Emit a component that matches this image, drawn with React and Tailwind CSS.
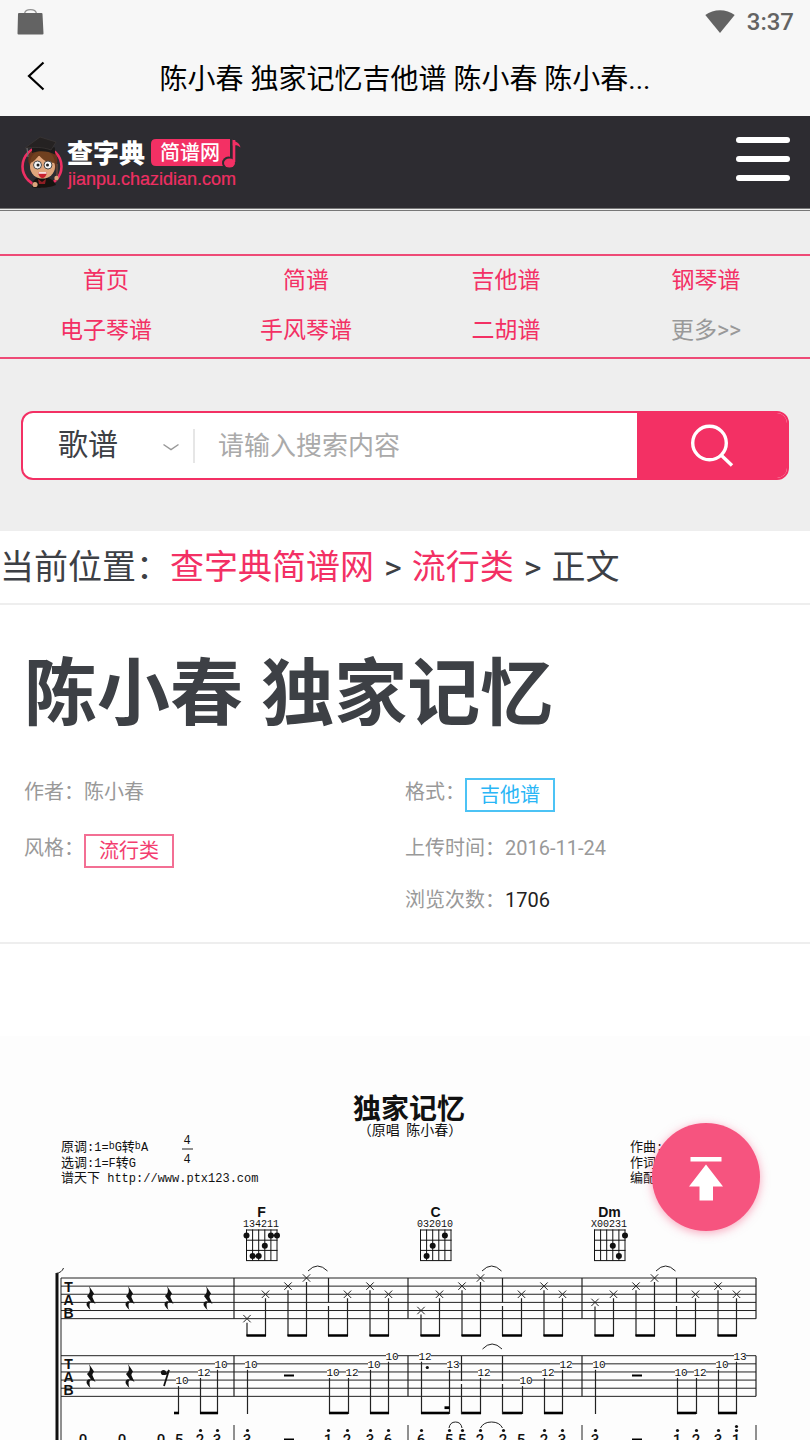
import React, { useState } from "react";

const navLinks = [
  { label: "首页", href: "#home" },
  { label: "简谱", href: "#jianpu" },
  { label: "吉他谱", href: "#guitar" },
  { label: "钢琴谱", href: "#piano" },
  { label: "电子琴谱", href: "#keyboard" },
  { label: "手风琴谱", href: "#accordion" },
  { label: "二胡谱", href: "#erhu" },
  { label: "更多>>", href: "#more", muted: true },
];

function StatusBar() {
  return (
    <div className="flex h-11 items-center justify-between px-4 text-[#636363]">
      <svg width="29" height="28" viewBox="0 0 29 28" aria-hidden="true">
        <path d="M8.5 5.500C9.500 .3 19.500 .3 20.500 5.500" fill="none" stroke="#909090" strokeWidth="1.300" />
        <path d="M3 5h22.500q1 0 1 1l1 19.500q0 1-1 1h-24q-1 0-1-1L2 6q0-1 1-1z" fill="currentColor" />
      </svg>
      <div className="flex items-center gap-3">
        <svg width="30" height="24" viewBox="0 0 30 24" aria-hidden="true">
          <path d="M.3 5C8.500-1.500 21.500-1.500 29.700 5L15 23z" fill="currentColor" />
        </svg>
        <span className="text-2xl font-medium">3:37</span>
      </div>
    </div>
  );
}

function TitleBar() {
  return (
    <div className="flex h-[72px] items-start">
      <button type="button" aria-label="返回" className="flex h-16 w-[72px] items-center justify-center">
        <svg width="18" height="30" viewBox="0 0 18 30" fill="none" stroke="#000" strokeWidth="2.200">
          <path d="M16.500 1.500L2 15l14.500 13.500" />
        </svg>
      </button>
      <h2 className="flex-1 truncate text-center text-[28px] leading-[72px] text-black">
        陈小春 独家记忆吉他谱 陈小春 陈小春...
      </h2>
      <div className="w-[72px]" />
    </div>
  );
}

function Logo() {
  return (
    <svg width="222" height="54" viewBox="0 0 222 54" role="img" aria-label="查字典简谱网" className="overflow-visible">
      {/* Mascot */}
      <circle cx="22" cy="30.500" r="19.500" fill="#2d2c31" stroke="#ee2f63" strokeWidth="2.600" />
      <path d="M12 51c0-7 4-10 10-10 7 0 12 3 14 8-6 2.500-18 4-24 2z" fill="#17130f" />
      <path d="M8.500 26C7 17 13 11 23 11s16 7 14 17l-2 6H11z" fill="#65341d" />
      <ellipse cx="22.500" cy="31" rx="12.500" ry="11.500" fill="#e0a67c" />
      <path d="M10 27c4-1 7-5 9-8 3 5 9 8 16 8-1-8-5-12-12-12S11 18 10 27z" fill="#70401f" />
      <circle cx="17.500" cy="29" r="4" fill="#f5f5f5" stroke="#4a4a4a" strokeWidth="1" />
      <circle cx="28" cy="29" r="4" fill="#f5f5f5" stroke="#4a4a4a" strokeWidth="1" />
      <circle cx="18" cy="29" r="1.500" fill="#222" />
      <circle cx="27.500" cy="29" r="1.500" fill="#222" />
      <path d="M18 36c3 .8 6 .8 9 0-.5 4-2.500 6-4.500 6S18.500 40 18 36z" fill="#c9202d" />
      <path d="M18.500 36.200h8v1.500h-8z" fill="#fff" />
      <path d="M18 43l4 3 4-3-1 5h-6z" fill="#8f1e24" />
      <path d="M12 9.500l23 2v7c-6-3.500-16-4.500-23-1.500z" fill="#1c1a1a" />
      <path d="M5 12L20 1l16 5-5 8c-8-3-17-3-26-2z" fill="#252222" stroke="#3f3b39" strokeWidth=".6" />
      <path d="M7 12l1 9" stroke="#777" strokeWidth="1" />
      <circle cx="15" cy="48.500" r="2.600" fill="#dca47c" />
      <path d="M37 28v17" stroke="#6b4b3b" strokeWidth="1.400" />
      <circle cx="36.500" cy="42" r="2.200" fill="#dca47c" />
      <text x="47" y="27" fill="#fff" className="font-['Noto_Sans_CJK_SC',sans-serif] text-[26px] font-black">查字典</text>
      {/* Badge with the note at its right edge */}
      <path d="M136 3h74v27h-74q-5 0-5-5V8q0-5 5-5z" fill="#f33064" />
      <path d="M214 4v22" stroke="#2d2c31" strokeWidth="6" />
      <circle cx="208.500" cy="27" r="6.500" fill="#2d2c31" />
      <path d="M214 4v22" stroke="#f33064" strokeWidth="2.600" />
      <ellipse cx="209.500" cy="27" rx="5.500" ry="4.500" fill="#f33064" />
      <path d="M212.700 3.500c2 3 6.500 1.500 7.800 8-2.500-2.500-5-2.500-7.800-2z" fill="#f33064" />
      <text x="140" y="24" fill="#fff" className="font-['Noto_Sans_CJK_SC',sans-serif] text-[20px] font-medium">简谱网</text>
      <text x="48" y="49" fill="#ee2f63" stroke="#ee2f63" strokeWidth=".2" className="font-['Liberation_Sans',sans-serif] text-[18px]">jianpu.chazidian.com</text>
    </svg>
  );
}

function SiteHeader() {
  return (
    <header>
      <div className="flex h-[92px] items-start justify-between bg-[#2d2c31] px-5 pt-5">
        <a href="#home">
          <Logo />
        </a>
        <button type="button" aria-label="菜单" className="flex flex-col gap-[13px] pt-px">
          <span className="h-1.5 w-[54px] rounded-full bg-white" />
          <span className="h-1.5 w-[54px] rounded-full bg-white" />
          <span className="h-1.5 w-[54px] rounded-full bg-white" />
        </button>
      </div>
      <div className="h-[3px] border-y border-[#777] bg-[#eee]" />
    </header>
  );
}

function SiteNav() {
  return (
    <nav className="grid grid-cols-4 gap-y-[14px] border-y-2 border-[#ee4a76] pt-[7px] pr-1 pb-2 pl-1.5">
      {navLinks.map((link) => (
        <a
          key={link.label}
          href={link.href}
          className={`text-center text-[23px] leading-9 ${link.muted ? "text-[#999]" : "text-[#f33064]"}`}
        >
          {link.label}
        </a>
      ))}
    </nav>
  );
}

function SearchBar() {
  const [keyword, setKeyword] = useState("");

  return (
    <form
      onSubmit={(e) => e.preventDefault()}
      className="mx-[21px] flex h-[69px] overflow-hidden rounded-xl border-2 border-[#f33064] bg-white"
    >
      <div className="relative flex w-[172px] items-center">
        <select aria-label="分类" className="h-full w-full appearance-none bg-transparent pb-0.5 pl-[35px] text-[30px] text-[#3d4045] outline-none">
          <option>歌谱</option>
          <option>歌词</option>
        </select>
        <svg className="pointer-events-none absolute right-4 top-[30px]" width="16" height="9" viewBox="0 0 16 9" fill="none" stroke="#999" strokeWidth="1.500">
          <path d="M.5 1.500L8 6.500l7.500-5" />
        </svg>
        <span className="h-[34px] w-0.5 bg-[#e6e6e6]" />
      </div>
      <input
        type="text"
        aria-label="搜索内容"
        value={keyword}
        onChange={(e) => setKeyword(e.target.value)}
        placeholder="请输入搜索内容"
        className="min-w-0 flex-1 pt-0.5 pl-[23px] text-[26px] text-[#3d4045] outline-none placeholder:text-[#aaa]"
      />
      <button type="submit" aria-label="搜索" className="flex w-[150px] items-center justify-center bg-[#f33064]">
        <svg width="44" height="44" viewBox="0 0 44 44" fill="none" stroke="#fff" strokeWidth="3.400">
          <circle cx="19.500" cy="19" r="16.800" />
          <path d="M31 31l11 10.500" />
        </svg>
      </button>
    </form>
  );
}

function Breadcrumb() {
  return (
    <div className="flex h-[74px] items-center gap-[10px] border-b-2 border-[#eee] whitespace-nowrap text-[34px] text-[#3d4045]">
      <span>
        当前位置：
        <a href="#home" className="text-[#f33064]">查字典简谱网</a>
      </span>
      <span>&gt;</span>
      <a href="#pop" className="text-[#f33064]">流行类</a>
      <span>&gt;</span>
      <span>正文</span>
    </div>
  );
}

function SongInfo() {
  return (
    <section className="border-b-2 border-[#eee] pb-7">
      <h1 className="pt-[37px] pl-6 text-[73px] leading-[104px] font-bold text-[#3d4045]">陈小春 独家记忆</h1>
      <div className="mt-8 grid grid-cols-2 text-xl leading-7 text-[#999]">
        <ul className="flex flex-col gap-[22px] pl-6">
          <li className="h-[34px]">作者：陈小春</li>
          <li className="flex items-start">
            风格：
            <a href="#pop" className="border-2 border-[#f36f94] px-[13px] py-px text-[#f33e6f]">流行类</a>
          </li>
        </ul>
        <ul className="flex flex-col gap-[22px]">
          <li className="flex items-start">
            格式：
            <a href="#guitar" className="border-2 border-[#4cc3f5] px-[13px] py-px text-[#29b6f6]">吉他谱</a>
          </li>
          <li className="h-[30px]">上传时间：2016-11-24</li>
          <li>
            浏览次数：<span className="text-[#222]">1706</span>
          </li>
        </ul>
      </div>
    </section>
  );
}

// Sheet drawing, 810 x 404 units
const TOP1 = 242;
const TOP2 = 319.7;
const STEP = 8.13;
const measures = [234, 408, 582];

const chords = [
  { name: "F", fingers: "134211", x: 246, dots: [[0, 0], [4, 0], [5, 0], [3, 1], [1, 2], [2, 2]], bars: [[4, 5, 0], [1, 2, 2]] },
  { name: "C", fingers: "032010", x: 420, dots: [[4, 0], [2, 1], [1, 2]], bars: [] },
  { name: "Dm", fingers: "X00231", x: 594, dots: [[5, 0], [3, 1], [4, 2]], bars: [] },
];

// [x, line, fret]
const frets = [
  [178, 4, "10"], [200, 3, "12"], [217, 2, "10"],
  [247, 2, "10"], [329, 3, "10"], [348, 3, "12"], [370, 2, "10"], [388, 1, "10"],
  [421, 1, "12"], [449, 2, "13"], [480, 3, "12"], [522, 4, "10"], [544, 3, "12"], [562, 2, "12"],
  [595, 2, "10"], [677, 3, "10"], [696, 3, "12"], [718, 2, "10"], [736, 1, "13"],
];
const lowerBeams = [[174, 179], [200, 218], [329, 348], [370, 389], [421, 449], [461, 481], [502, 522], [544, 563], [677, 696], [718, 737]];

// [x, digit, dots above]
const digits = [
  [83, "0", 0], [122, "0", 0], [161, "0", 0], [179, "5", 0], [200, "2", 1], [217, "3", 1],
  [247, "3", 1], [328, "1", 1], [347, "2", 1], [370, "3", 1], [388, "6", 1],
  [421, "6", 1], [449, "5", 1], [462, "5", 1], [480, "2", 1], [503, "2", 1], [521, "5", 0], [544, "2", 1], [562, "3", 1],
  [595, "3", 1], [677, "1", 1], [696, "2", 1], [718, "3", 1], [736, "1", 2],
];

function Staff({ top }) {
  return (
    <g>
      {[0, 1, 2, 3, 4, 5].map((i) => (
        <path key={i} d={`M61 ${top + i * STEP}H756`} stroke="#222" strokeWidth="1" />
      ))}
      {[...measures, 756].map((x) => (
        <path key={x} d={`M${x} ${top}v${STEP * 5}`} stroke="#222" strokeWidth="1.200" />
      ))}
      {["T", "A", "B"].map((letter, i) => (
        <text key={letter} x="68.500" y={top + 13.5 + i * 13} textAnchor="middle" className="font-['Liberation_Sans',sans-serif] text-[14px] font-bold">
          {letter}
        </text>
      ))}
    </g>
  );
}

function QuarterRest({ x, y }) {
  return (
    <path
      transform={`translate(${x} ${y})`}
      d="M-1 0L4 7.500Q2 10 2.500 11.500L5.500 18Q0 14-.500 18.500Q-.500 22 .500 24Q-5 19-3 16.500Q-1.500 14.500 1 15.500L-3 10Q1.500 6.500-1 0z"
    />
  );
}

function Strum({ x, line, tied }) {
  const y = TOP1 + (line - 1) * STEP;
  if (tied) return <path d={`M${x} ${TOP1}v24M${x} ${TOP1 + 28}v30`} stroke="#222" strokeWidth="1.200" />;
  return (
    <g stroke="#222" fill="none">
      <path d={`M${x - 3.7} ${y - 3.7}l7.400 7.400M${x + 3.7} ${y - 3.7}l-7.400 7.400`} strokeWidth="1" />
      <path d={`M${x} ${y + 4}V300`} strokeWidth="1.200" />
    </g>
  );
}

function ScoreSheet() {
  return (
    <svg viewBox="0 0 810 404" className="block w-full bg-[#fdfdfd] font-['Liberation_Mono','Noto_Sans_CJK_SC',monospace]" fill="#111" role="img" aria-label="独家记忆吉他谱">
      <text x="409" y="83" textAnchor="middle" className="font-['Noto_Sans_CJK_SC',sans-serif] text-[28px] font-bold">独家记忆</text>
      <text x="410" y="99" textAnchor="middle" className="font-['Noto_Sans_CJK_SC',sans-serif] text-[14px]">（原唱&nbsp; 陈小春）</text>

      <g className="text-[12px]">
        <text x="61" y="115">
          <tspan className="text-[13px]">原调</tspan>:1=<tspan className="text-[10px]" dy="-2">b</tspan><tspan dy="2">G</tspan><tspan className="text-[13px]">转</tspan><tspan className="text-[10px]" dy="-2">b</tspan><tspan dy="2">A</tspan>
        </text>
        <text x="61" y="131">
          <tspan className="text-[13px]">选调</tspan>:1=F<tspan className="text-[13px]">转</tspan>G
        </text>
        <text x="61" y="146">
          <tspan className="text-[13px]">谱天下</tspan> http://www.ptx123.com
        </text>
        <text x="187" y="108" textAnchor="middle">4</text>
        <path d="M182 113h11" stroke="#222" />
        <text x="187" y="127" textAnchor="middle">4</text>
        <text x="630" y="115"><tspan className="text-[13px]">作曲</tspan>:</text>
        <text x="630" y="131"><tspan className="text-[13px]">作词</tspan>:</text>
        <text x="630" y="146"><tspan className="text-[13px]">编配</tspan>:</text>
      </g>

      {chords.map((c) => (
        <g key={c.name}>
          <text x={c.x + 15.5} y="181" textAnchor="middle" className="font-['Liberation_Sans',sans-serif] text-[14px] font-bold">{c.name}</text>
          <text x={c.x + 15} y="191" textAnchor="middle" className="font-['Liberation_Mono',monospace] text-[10px]">{c.fingers}</text>
          <g stroke="#111" strokeWidth="1" fill="none">
            {[0, 1, 2, 3, 4, 5].map((i) => (
              <path key={i} d={`M${c.x + 0.5 + i * 6.1} 193.500v31`} />
            ))}
            {[0, 1, 2, 3].map((i) => (
              <path key={i} d={`M${c.x} ${194 + i * 10.2}h31.500`} />
            ))}
            {c.bars.map(([a, b, row]) => (
              <path key={row} d={`M${c.x + a * 6.1} ${199.5 + row * 10.3}H${c.x + b * 6.1}`} strokeWidth="1.500" />
            ))}
          </g>
          {c.dots.map(([s, row]) => (
            <circle key={`${s}-${row}`} cx={c.x + 0.5 + s * 6.1} cy={199.5 + row * 10.3} r="3" />
          ))}
        </g>
      ))}

      {/* System bracket */}
      <path d="M55.500 237h3v167h-3z" />
      <path d="M56 237.500q6-1 7.500-5.500" fill="none" stroke="#222" />
      <path d="M61 242v162" stroke="#222" />

      <Staff top={TOP1} />
      {[90, 129, 168, 207].map((x) => (
        <QuarterRest key={x} x={x} y={250} />
      ))}
      {measures.map((m, i) => (
        <g key={m}>
          <Strum x={m + 13} line={[6, 5, 4][i]} />
          <Strum x={m + 31.5} line={3} />
          <Strum x={m + 54} line={2} />
          <Strum x={m + 72.5} line={1} />
          <Strum x={m + 94.5} line={1} tied />
          <Strum x={m + 113.5} line={3} />
          <Strum x={m + 136} line={2} />
          <Strum x={m + 154.5} line={3} />
          <path
            d={`M${m + 12.5} 299.500h19.500M${m + 53.5} 299.500h19.500M${m + 94} 299.500h20M${m + 135.5} 299.500h19.500`}
            stroke="#000"
            strokeWidth="2.600"
          />
          <path d={`M${m + 74} 235q9.500-10 19.500 0`} fill="none" stroke="#222" />
        </g>
      ))}

      <Staff top={TOP2} />
      <QuarterRest x={90} y={328} />
      <QuarterRest x={129} y={328} />
      <circle cx="163.500" cy="336.500" r="2.600" />
      <path d="M163 338q4 1 6-4l-5 16" fill="none" stroke="#111" strokeWidth="1.800" />
      {frets.map(([x, line, fret]) => {
        const y = TOP2 + (line - 1) * STEP;
        return (
          <g key={x}>
            <rect x={x - 2} y={y - 1.5} width="12" height="3" fill="#fdfdfd" />
            <text x={x + 4} y={y + 4} textAnchor="middle" className="font-['Liberation_Mono',monospace] text-[11px]">{fret}</text>
            <path d={`M${x + 0.5} ${y + 6}V378`} stroke="#222" strokeWidth="1.200" />
          </g>
        );
      })}
      {lowerBeams.map(([a, b]) => (
        <path key={a} d={`M${a} 377h${b - a}`} stroke="#000" strokeWidth="2.600" />
      ))}
      <path d="M444.500 371.700h5" stroke="#000" strokeWidth="2.800" />
      <path d="M461.500 320v25M461.500 348v30M502.500 320v25M502.500 348v30" stroke="#222" strokeWidth="1.200" />
      <path d="M482.500 313q9.500-10 19.500 0" fill="none" stroke="#222" />
      <circle cx="427.300" cy="331.500" r="1.600" />
      <path d="M284 339.500h10M632 339.500h10" stroke="#000" strokeWidth="2" />

      {/* Numbered notation */}
      <path d="M234 389v15M408 389v15M582 389v15M756 389v15" stroke="#222" />
      {digits.map(([x, digit, dots]) => (
        <g key={x}>
          <text x={x} y="409" textAnchor="middle" className="font-[Roboto,sans-serif] text-[15px] font-medium">{digit}</text>
          {dots > 0 && <circle cx={x + 0.5} cy="394.500" r="1.600" />}
          {dots > 1 && <circle cx={x + 0.5} cy="390.500" r="1.600" />}
        </g>
      ))}
      <path d="M284 403.500h10M632 403.500h10" stroke="#000" strokeWidth="2" />
      <path d="M449 392q1-6 6.500-6t6.500 6M480.500 392q3-6 11-6t11 6" fill="none" stroke="#222" />
    </svg>
  );
}

function BackToTop() {
  return (
    <button
      type="button"
      aria-label="回到顶部"
      onClick={() => window.scrollTo(0, 0)}
      className="fixed right-[50px] bottom-[209px] flex h-[108px] w-[108px] items-center justify-center rounded-full bg-[#f6547f] pt-1 shadow-[0_2px_10px_rgba(246,84,127,0.5)]"
    >
      <svg width="34" height="44" viewBox="0 0 34 44" fill="#fff" aria-hidden="true">
        <path d="M1.500 0h31v4.500h-31zM17 7.500L34 29.500H24V43.500H10.500V29.500H0z" />
      </svg>
    </button>
  );
}

export default function App() {
  return (
    <div className="min-h-screen bg-white font-[Roboto,'Noto_Sans_CJK_SC',sans-serif]">
      <div className="bg-[#f7f7f7]">
        <StatusBar />
        <TitleBar />
      </div>
      <SiteHeader />
      <div className="bg-[#eee] pt-[43px] pb-[51px]">
        <SiteNav />
        <div className="mt-[52px]">
          <SearchBar />
        </div>
      </div>
      <main>
        <Breadcrumb />
        <SongInfo />
        <div className="pt-[92px]">
          <ScoreSheet />
        </div>
      </main>
      <BackToTop />
    </div>
  );
}
